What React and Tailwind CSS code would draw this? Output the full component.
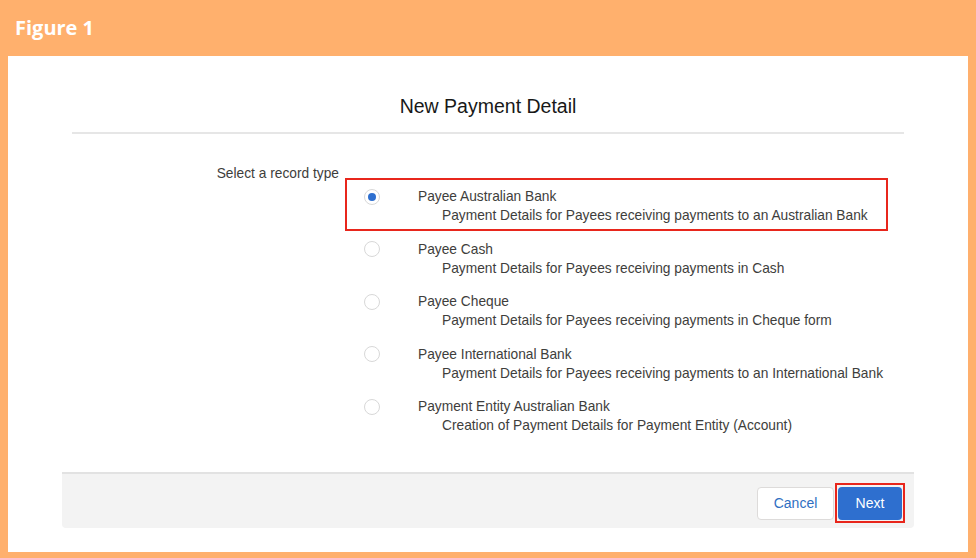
import React from 'react'

const options = [
  { name: 'Payee Australian Bank', desc: 'Payment Details for Payees receiving payments to an Australian Bank', selected: true },
  { name: 'Payee Cash', desc: 'Payment Details for Payees receiving payments in Cash' },
  { name: 'Payee Cheque', desc: 'Payment Details for Payees receiving payments in Cheque form' },
  { name: 'Payee International Bank', desc: 'Payment Details for Payees receiving payments to an International Bank' },
  { name: 'Payment Entity Australian Bank', desc: 'Creation of Payment Details for Payment Entity (Account)' },
]

const Radio = ({ checked }) => (
  <span className="w-4 h-4 rounded-full border border-[#d8d8d8] bg-white flex items-center justify-center shrink-0">
    {checked && <span className="w-[8px] h-[8px] rounded-full bg-[#2e6fcf]" />}
  </span>
)

const App = () => {
  return (
    <div className="w-[976px] h-[558px] bg-[#ffb06d] flex flex-col font-['Liberation_Sans',Arial,sans-serif]">
      <div className="h-[56px] px-[15px] flex items-center">
        <span className="text-white font-bold text-[20px] font-['Open_Sans',sans-serif] leading-none">Figure 1</span>
      </div>
      <div className="mx-[8px] mb-[6px] flex-1 bg-white flex flex-col">
        <h1 className="pt-[38px] text-center text-[19.5px] leading-[24px] text-[#181818]">New Payment Detail</h1>
        <div className="mx-16 mt-[14px] h-[2px] bg-[#e6e6e6]" />

        <div className="mt-[30px] flex gap-[6px] text-[13.75px] leading-[19px] text-[#3e3e3c]">
          <div className="w-[331px] text-right">Select a record type</div>
          <div className="pt-[14px] flex flex-col">
            {options.map((o) => (
              <div
                key={o.name}
                className={`w-[543px] h-[52.5px] border-2 pl-[17px] pt-[7px] flex ${o.selected ? 'border-[#e8261c]' : 'border-transparent'}`}
              >
                <div className="h-[19px] flex items-center">
                  <Radio checked={o.selected} />
                </div>
                <div className="ml-[38px] flex flex-col">
                  <span>{o.name}</span>
                  <span className="pl-[24px] whitespace-nowrap">{o.desc}</span>
                </div>
              </div>
            ))}
          </div>
        </div>

        <div className="mx-[54px] mt-[31px] h-[56px] border-t-2 border-[#e2e2e2] bg-[#f3f3f3] rounded-b-[4px] flex justify-end items-start pt-[9px] pr-[9px] gap-[1px] text-[14px]">
          <button className="mt-[4px] w-[77px] h-[33px] rounded-[4px] border border-[#dddbda] bg-white text-[#2f6fc2]">Cancel</button>
          <span className="border-2 border-[#e8261c] px-[1px] pt-[2px] pb-[1px] flex">
            <button className="w-[64px] h-[33px] rounded-[4px] bg-[#2e6fcf] text-white">Next</button>
          </span>
        </div>
      </div>
    </div>
  )
}

export default App
